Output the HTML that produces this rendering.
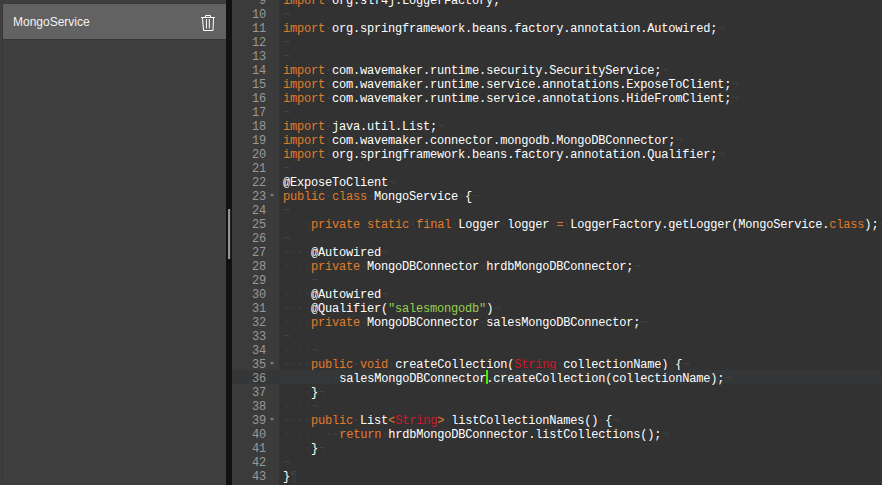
<!DOCTYPE html>
<html><head><meta charset="utf-8">
<style>
html,body{margin:0;padding:0}
body{width:882px;height:485px;overflow:hidden;position:relative;background:#3f3f3f}
#side{position:absolute;left:0;top:0;width:226px;height:485px;background:#3f3f3f}
#side .vl{position:absolute;left:2px;top:0;width:1px;height:485px;background:#383838}
#side .hl{position:absolute;left:2px;top:3px;width:224px;height:1px;background:#393939}
#item{position:absolute;left:3px;top:4px;width:223px;height:35px;background:#626262}
#item .bb{position:absolute;left:0;top:35px;width:223px;height:1px;background:#373737}
#item .lbl{position:absolute;left:10px;top:1px;height:35px;line-height:35px;font-family:"Liberation Sans",sans-serif;font-size:12px;color:#f2f2f2}
#trash{position:absolute;left:198px;top:12px}
#track{position:absolute;left:226px;top:0;width:6px;height:485px;background:#121212}
#thumb{position:absolute;left:228px;top:209px;width:2px;height:50px;background:#939393;box-shadow:0.5px 0 0 rgba(147,147,147,.35)}
#gutter{position:absolute;left:232px;top:0;width:47px;height:485px;background:#3b3b3b;overflow:hidden}
#code{position:absolute;left:279px;top:0;width:603px;height:485px;background:#323232;overflow:hidden}
.r,.g{position:absolute;height:14px;white-space:pre;font-family:"Liberation Mono",monospace;font-size:12px;letter-spacing:-0.2px}
.r{left:0;width:603px}
.g{left:0;width:47px;color:#999}
.r.act,.g.act{background:#353637}
.r{line-height:14px}
.g span{position:absolute;right:13px;top:2px;line-height:14px}
.r span{position:relative;top:2px}
.r{padding-left:4px;box-sizing:border-box}
.k{color:#e07c2c}.t{color:#fff}.s{color:#95cf4e}.f{color:#d0182a}.i{color:#404040}
.fd{position:absolute;left:38px;top:6px;width:0;height:0;border-left:2.5px solid transparent;border-right:2.5px solid transparent;border-top:3px solid #808080}
#cursor{position:absolute;left:486px;top:370px;width:2px;height:14px;background:#44ee00}
</style></head><body>
<div id="side"><div class="vl"></div><div class="hl"></div>
<div id="item"><div class="lbl">MongoService</div><div class="bb"></div>
</div>
<svg id="trash" width="20" height="22" viewBox="0 0 20 22"><g fill="none" stroke="#fff" stroke-width="1">
<path d="M7.5 5 V3.5 H12.5 V5"/>
<path d="M3 5.5 H17"/>
<path d="M4.5 6 L5.5 18.5 H15 L15.5 6"/>
<path d="M8.4 7 V16.5 M11.3 7 V16.5"/>
</g></svg>
</div>
<div id="track"></div><div id="thumb"></div>
<div id="gutter">
<div class="g" style="top:-8px"><span>9</span></div>
<div class="g" style="top:6px"><span>10</span></div>
<div class="g" style="top:20px"><span>11</span></div>
<div class="g" style="top:34px"><span>12</span></div>
<div class="g" style="top:48px"><span>13</span></div>
<div class="g" style="top:62px"><span>14</span></div>
<div class="g" style="top:76px"><span>15</span></div>
<div class="g" style="top:90px"><span>16</span></div>
<div class="g" style="top:104px"><span>17</span></div>
<div class="g" style="top:118px"><span>18</span></div>
<div class="g" style="top:132px"><span>19</span></div>
<div class="g" style="top:146px"><span>20</span></div>
<div class="g" style="top:160px"><span>21</span></div>
<div class="g" style="top:174px"><span>22</span></div>
<div class="g" style="top:188px"><span>23</span><i class="fd"></i></div>
<div class="g" style="top:202px"><span>24</span></div>
<div class="g" style="top:216px"><span>25</span></div>
<div class="g" style="top:230px"><span>26</span></div>
<div class="g" style="top:244px"><span>27</span></div>
<div class="g" style="top:258px"><span>28</span></div>
<div class="g" style="top:272px"><span>29</span></div>
<div class="g" style="top:286px"><span>30</span></div>
<div class="g" style="top:300px"><span>31</span></div>
<div class="g" style="top:314px"><span>32</span></div>
<div class="g" style="top:328px"><span>33</span></div>
<div class="g" style="top:342px"><span>34</span></div>
<div class="g" style="top:356px"><span>35</span><i class="fd"></i></div>
<div class="g act" style="top:370px"><span>36</span></div>
<div class="g" style="top:384px"><span>37</span></div>
<div class="g" style="top:398px"><span>38</span></div>
<div class="g" style="top:412px"><span>39</span><i class="fd"></i></div>
<div class="g" style="top:426px"><span>40</span></div>
<div class="g" style="top:440px"><span>41</span></div>
<div class="g" style="top:454px"><span>42</span></div>
<div class="g" style="top:468px"><span>43</span></div>
</div>
<div id="code">
<div class="r" style="top:-8px"><span class="k">import</span><span class="i">·</span><span class="t">org</span><span class="t">.</span><span class="t">slf4j</span><span class="t">.</span><span class="t">LoggerFactory</span><span class="t">;</span><span class="i">¬</span></div>
<div class="r" style="top:6px"><span class="i">¬</span></div>
<div class="r" style="top:20px"><span class="k">import</span><span class="i">·</span><span class="t">org</span><span class="t">.</span><span class="t">springframework</span><span class="t">.</span><span class="t">beans</span><span class="t">.</span><span class="t">factory</span><span class="t">.</span><span class="t">annotation</span><span class="t">.</span><span class="t">Autowired</span><span class="t">;</span><span class="i">¬</span></div>
<div class="r" style="top:34px"><span class="i">¬</span></div>
<div class="r" style="top:48px"><span class="i">¬</span></div>
<div class="r" style="top:62px"><span class="k">import</span><span class="i">·</span><span class="t">com</span><span class="t">.</span><span class="t">wavemaker</span><span class="t">.</span><span class="t">runtime</span><span class="t">.</span><span class="t">security</span><span class="t">.</span><span class="t">SecurityService</span><span class="t">;</span><span class="i">¬</span></div>
<div class="r" style="top:76px"><span class="k">import</span><span class="i">·</span><span class="t">com</span><span class="t">.</span><span class="t">wavemaker</span><span class="t">.</span><span class="t">runtime</span><span class="t">.</span><span class="t">service</span><span class="t">.</span><span class="t">annotations</span><span class="t">.</span><span class="t">ExposeToClient</span><span class="t">;</span><span class="i">¬</span></div>
<div class="r" style="top:90px"><span class="k">import</span><span class="i">·</span><span class="t">com</span><span class="t">.</span><span class="t">wavemaker</span><span class="t">.</span><span class="t">runtime</span><span class="t">.</span><span class="t">service</span><span class="t">.</span><span class="t">annotations</span><span class="t">.</span><span class="t">HideFromClient</span><span class="t">;</span><span class="i">¬</span></div>
<div class="r" style="top:104px"><span class="i">¬</span></div>
<div class="r" style="top:118px"><span class="k">import</span><span class="i">·</span><span class="t">java</span><span class="t">.</span><span class="t">util</span><span class="t">.</span><span class="t">List</span><span class="t">;</span><span class="i">¬</span></div>
<div class="r" style="top:132px"><span class="k">import</span><span class="i">·</span><span class="t">com</span><span class="t">.</span><span class="t">wavemaker</span><span class="t">.</span><span class="t">connector</span><span class="t">.</span><span class="t">mongodb</span><span class="t">.</span><span class="t">MongoDBConnector</span><span class="t">;</span><span class="i">¬</span></div>
<div class="r" style="top:146px"><span class="k">import</span><span class="i">·</span><span class="t">org</span><span class="t">.</span><span class="t">springframework</span><span class="t">.</span><span class="t">beans</span><span class="t">.</span><span class="t">factory</span><span class="t">.</span><span class="t">annotation</span><span class="t">.</span><span class="t">Qualifier</span><span class="t">;</span><span class="i">¬</span></div>
<div class="r" style="top:160px"><span class="i">¬</span></div>
<div class="r" style="top:174px"><span class="t">@</span><span class="t">ExposeToClient</span><span class="i">¬</span></div>
<div class="r" style="top:188px"><span class="k">public</span><span class="i">·</span><span class="k">class</span><span class="i">·</span><span class="t">MongoService</span><span class="i">·</span><span class="t">{</span><span class="i">¬</span></div>
<div class="r" style="top:202px"><span class="i">¬</span></div>
<div class="r" style="top:216px"><span class="i">·</span><span class="i">·</span><span class="i">·</span><span class="i">·</span><span class="k">private</span><span class="i">·</span><span class="k">static</span><span class="i">·</span><span class="k">final</span><span class="i">·</span><span class="t">Logger</span><span class="i">·</span><span class="t">logger</span><span class="i">·</span><span class="k">=</span><span class="i">·</span><span class="t">LoggerFactory</span><span class="t">.</span><span class="t">getLogger</span><span class="t">(</span><span class="t">MongoService</span><span class="t">.</span><span class="k">class</span><span class="t">)</span><span class="t">;</span><span class="i">¬</span></div>
<div class="r" style="top:230px"><span class="i">¬</span></div>
<div class="r" style="top:244px"><span class="i">·</span><span class="i">·</span><span class="i">·</span><span class="i">·</span><span class="t">@</span><span class="t">Autowired</span><span class="i">¬</span></div>
<div class="r" style="top:258px"><span class="i">·</span><span class="i">·</span><span class="i">·</span><span class="i">·</span><span class="k">private</span><span class="i">·</span><span class="t">MongoDBConnector</span><span class="i">·</span><span class="t">hrdbMongoDBConnector</span><span class="t">;</span><span class="i">¬</span></div>
<div class="r" style="top:272px"><span class="i">·</span><span class="i">·</span><span class="i">·</span><span class="i">·</span><span class="i">¬</span></div>
<div class="r" style="top:286px"><span class="i">·</span><span class="i">·</span><span class="i">·</span><span class="i">·</span><span class="t">@</span><span class="t">Autowired</span><span class="i">¬</span></div>
<div class="r" style="top:300px"><span class="i">·</span><span class="i">·</span><span class="i">·</span><span class="i">·</span><span class="t">@</span><span class="t">Qualifier</span><span class="t">(</span><span class="s">&quot;salesmongodb&quot;</span><span class="t">)</span><span class="i">¬</span></div>
<div class="r" style="top:314px"><span class="i">·</span><span class="i">·</span><span class="i">·</span><span class="i">·</span><span class="k">private</span><span class="i">·</span><span class="t">MongoDBConnector</span><span class="i">·</span><span class="t">salesMongoDBConnector</span><span class="t">;</span><span class="i">¬</span></div>
<div class="r" style="top:328px"><span class="i">¬</span></div>
<div class="r" style="top:342px"><span class="i">·</span><span class="i">·</span><span class="i">·</span><span class="i">·</span><span class="i">¬</span></div>
<div class="r" style="top:356px"><span class="i">·</span><span class="i">·</span><span class="i">·</span><span class="i">·</span><span class="k">public</span><span class="i">·</span><span class="k">void</span><span class="i">·</span><span class="t">createCollection</span><span class="t">(</span><span class="f">String</span><span class="i">·</span><span class="t">collectionName</span><span class="t">)</span><span class="i">·</span><span class="t">{</span><span class="i">¬</span></div>
<div class="r act" style="top:370px"><span class="i">·</span><span class="i">·</span><span class="i">·</span><span class="i">·</span><span class="i">·</span><span class="i">·</span><span class="i">·</span><span class="i">·</span><span class="t">salesMongoDBConnector</span><span class="t">.</span><span class="t">createCollection</span><span class="t">(</span><span class="t">collectionName</span><span class="t">)</span><span class="t">;</span><span class="i">¬</span></div>
<div class="r" style="top:384px"><span class="i">·</span><span class="i">·</span><span class="i">·</span><span class="i">·</span><span class="t">}</span><span class="i">¬</span></div>
<div class="r" style="top:398px"><span class="i">·</span><span class="i">·</span><span class="i">·</span><span class="i">·</span><span class="i">¬</span></div>
<div class="r" style="top:412px"><span class="i">·</span><span class="i">·</span><span class="i">·</span><span class="i">·</span><span class="k">public</span><span class="i">·</span><span class="t">List</span><span class="k">&lt;</span><span class="f">String</span><span class="k">&gt;</span><span class="i">·</span><span class="t">listCollectionNames</span><span class="t">(</span><span class="t">)</span><span class="i">·</span><span class="t">{</span><span class="i">¬</span></div>
<div class="r" style="top:426px"><span class="i">·</span><span class="i">·</span><span class="i">·</span><span class="i">·</span><span class="i">·</span><span class="i">·</span><span class="i">·</span><span class="i">·</span><span class="k">return</span><span class="i">·</span><span class="t">hrdbMongoDBConnector</span><span class="t">.</span><span class="t">listCollections</span><span class="t">(</span><span class="t">)</span><span class="t">;</span><span class="i">¬</span></div>
<div class="r" style="top:440px"><span class="i">·</span><span class="i">·</span><span class="i">·</span><span class="i">·</span><span class="t">}</span><span class="i">¬</span></div>
<div class="r" style="top:454px"><span class="i">¬</span></div>
<div class="r" style="top:468px"><span class="t">}</span><span class="i">¶</span></div>
</div>
<div id="cursor"></div>
</body></html>
